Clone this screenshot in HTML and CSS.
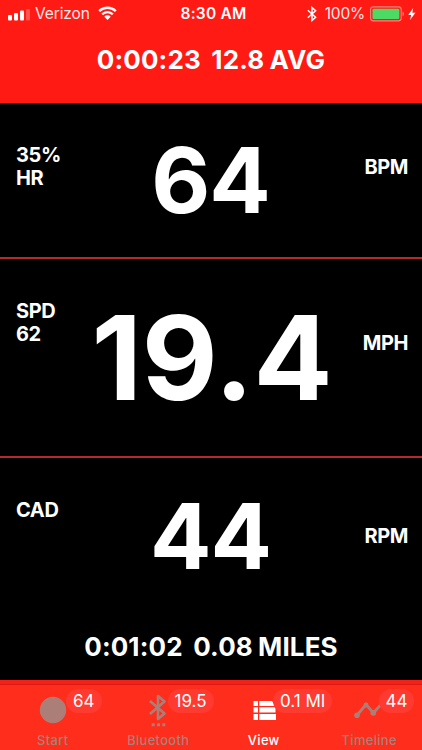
FILE: index.html
```html
<!DOCTYPE html>
<html lang="en">
<head>
    <meta charset="UTF-8">
    <meta name="viewport" content="width=device-width, initial-scale=1.0">
    <title>Ride View</title>
    <link rel="stylesheet" href="styles.css">
</head>
<body>
    <header class="header">
        <div class="status-bar">
            <div class="status-left">
                <svg class="signal" width="22" height="12" viewBox="0 0 22 12" fill="#fff">
                    <rect x="0" y="6" width="4" height="5.5" rx="1"/>
                    <rect x="6" y="4" width="4" height="7.5" rx="1"/>
                    <rect x="12" y="1.5" width="4" height="10" rx="1"/>
                    <rect x="18" y="0" width="4" height="11.5" rx="1" opacity=".25"/>
                </svg>
                <span class="carrier">Verizon</span>
                <svg class="wifi" width="19" height="14" viewBox="0 0 19 14">
                    <path d="M1.2 5.1a11.8 11.8 0 0 1 16.6 0M4.2 8.3a7.5 7.5 0 0 1 10.6 0" fill="none" stroke="#fff" stroke-width="2.4"/>
                    <path d="M9.5 14 6.3 10.7a4.5 4.5 0 0 1 6.4 0z" fill="#fff"/>
                </svg>
            </div>
            <span class="clock">8:30 AM</span>
            <div class="status-right">
                <svg class="bt" width="10" height="16" viewBox="0 0 10 16" fill="none" stroke="#fff" stroke-width="1.5">
                    <path d="M.8 4.3 8.6 11.3 5 14.5V1.5l3.6 3.2L.8 11.7"/>
                </svg>
                <span class="percent">100%</span>
                <svg class="battery" width="36" height="16" viewBox="0 0 36 16">
                    <rect x=".6" y=".9" width="30.6" height="14" rx="2.6" fill="none" stroke="#fff" stroke-opacity=".45" stroke-width="1.1"/>
                    <rect x="2.5" y="2.8" width="26.8" height="10.2" rx="1" fill="#4cd964"/>
                    <path d="M32.6 5.5c1.8.8 1.8 4 0 4.8z" fill="#fff" opacity=".5"/>
                </svg>
                <svg class="bolt" width="8" height="12" viewBox="0 0 8 12" fill="#fff">
                    <path d="M5.2 0 .2 6.9h3L2 12l5.5-7.2H4.3z"/>
                </svg>
            </div>
        </div>
        <div class="summary">0:00:23&nbsp; 12.8 AVG</div>
    </header>

    <main class="metrics">
        <section class="metric metric-hr">
            <div class="label">35%<br>HR</div>
            <div class="value">64</div>
            <div class="unit">BPM</div>
        </section>
        <section class="metric metric-spd">
            <div class="label">SPD<br>62</div>
            <div class="value">19.4</div>
            <div class="unit">MPH</div>
        </section>
        <section class="metric metric-cad">
            <div class="label">CAD</div>
            <div class="value">44</div>
            <div class="unit">RPM</div>
        </section>
        <div class="total">0:01:02&nbsp; 0.08 MILES</div>
    </main>

    <nav class="tab-bar">
        <div class="tab tab-start">
            <svg class="icon" width="34" height="34" viewBox="0 0 34 34">
                <circle cx="17" cy="17" r="13.2" fill="currentColor"/>
            </svg>
            <span class="badge">64</span>
            <span class="tab-name">Start</span>
        </div>
        <div class="tab">
            <svg class="icon" width="34" height="34" viewBox="0 0 34 34">
                <path d="M9 8 23.5 20.5 17 26V3l6.5 5.5L9 21" fill="none" stroke="currentColor" stroke-width="2.6" stroke-linejoin="round"/>
                <path d="M10.7 30.2h3v3h-3zM16 30.2h3v3h-3zM21.3 30.2h3v3h-3z" fill="currentColor"/>
            </svg>
            <span class="badge">19.5</span>
            <span class="tab-name">Bluetooth</span>
        </div>
        <div class="tab active">
            <svg class="icon" width="34" height="34" viewBox="0 0 34 34" fill="currentColor">
                <path d="M6.500 8h4.500v5H6.500zM12.300 8H25l2 3v2H12.300zM6.500 14.300h4.500v5.200H6.500zM12.300 14.300H28.500v5.200H12.300zM6.500 20.900h4.500v6H6.500zM12.300 20.900H29v6H12.300z"/>
            </svg>
            <span class="badge">0.1 MI</span>
            <span class="tab-name">View</span>
        </div>
        <div class="tab">
            <svg class="icon" width="34" height="34" viewBox="0 0 34 34">
                <path d="M5 22.300 14 11.500 21.500 20 28.500 12" fill="none" stroke="currentColor" stroke-width="2.800"/>
                <g fill="currentColor">
                    <circle cx="5" cy="22.300" r="2.800"/>
                    <circle cx="14" cy="12" r="2.400"/>
                    <circle cx="21.300" cy="19.800" r="2.900"/>
                </g>
            </svg>
            <span class="badge">44</span>
            <span class="tab-name">Timeline</span>
        </div>
    </nav>
</body>
</html>
```
FILE: styles.css
```css
* {
    box-sizing: border-box;
}
body {
    margin: 0;
    height: 750px;
    display: flex;
    flex-direction: column;
    background-color: #000;
    color: #fff;
    font-family: Inter, "Liberation Sans", sans-serif;
    overflow: hidden;
}
/* Header */
.header {
    height: 103px;
    background-color: #ff1a13;
}
.status-bar {
    display: grid;
    grid-template-columns: 1fr auto 1fr;
    align-items: center;
    height: 28px;
    padding: 0 6px 0 8px;
    font-size: 16px;
    line-height: 28px;
}
.status-left, .status-right {
    display: flex;
    align-items: center;
}
.status-right {
    justify-content: flex-end;
}
.signal {
    margin-top: 2px;
}
.carrier {
    margin: 0 8px 0 5px;
    font-size: 15.5px;
    letter-spacing: -0.1px;
    opacity: 0.9;
}
.wifi {
    margin-top: -2px;
}
.clock {
    margin-left: 3px;
    font-size: 15.5px;
    font-weight: 600;
    letter-spacing: 0.2px;
}
.percent {
    margin: 0 5px 0 8px;
    font-size: 15.5px;
    letter-spacing: -0.2px;
    opacity: 0.9;
}
.bolt {
    margin-left: 2px;
}
.summary {
    margin-top: 15px;
    text-align: center;
    font-size: 26px;
    font-weight: 700;
    line-height: 34px;
    letter-spacing: 0.12px;
    word-spacing: -1px;
}
/* Metrics */
.metrics {
    height: 577px;
}
.metric {
    display: grid;
    grid-template-columns: 1fr auto 1fr;
    align-items: start;
    padding: 0 14px 0 16px;
    border-bottom: 2px solid #b32b2e;
    font-weight: 700;
}
.label, .unit {
    font-size: 20px;
    line-height: 23px;
    letter-spacing: -0.4px;
}
.unit {
    text-align: right;
}
.value {
    margin-left: -3px;
    font-size: 91px;
    line-height: 90px;
    letter-spacing: -1px;
}
.metric-hr {
    height: 156px;
    padding-top: 32px;
}
.metric-hr .label {
    margin-top: 9px;
}
.metric-hr .unit {
    margin-top: 21px;
}
.metric-spd {
    height: 199px;
    padding-top: 41px;
}
.metric-spd .value {
    margin-left: 0;
    font-size: 117px;
    line-height: 116px;
    letter-spacing: 0;
}
.metric-spd .unit {
    margin-top: 32px;
}
.metric-cad {
    height: 168px;
    padding-top: 33px;
    border-bottom: 0;
}
.metric-cad .label {
    margin-top: 8px;
}
.metric-cad .unit {
    margin-top: 34px;
}
.total {
    margin-top: 4px;
    text-align: center;
    font-size: 26px;
    font-weight: 700;
    line-height: 34px;
    letter-spacing: 0.12px;
    word-spacing: -1px;
}
/* Tab bar */
.tab-bar {
    display: grid;
    grid-template-columns: repeat(4, 1fr);
    height: 70px;
    border-top: 4px solid #f4201a;
    background-color: #ff2d1b;
    box-shadow: inset 0 1px 0 #dc1915;
}
.tab {
    position: relative;
    display: flex;
    flex-direction: column;
    align-items: center;
    padding-top: 9px;
    color: #ab7f78;
}
.tab.active {
    color: #fff;
}
.tab-name {
    margin-top: 5px;
    font-size: 13px;
    font-weight: 500;
    line-height: 16px;
    letter-spacing: 0.3px;
}
.badge {
    position: absolute;
    top: 5px;
    left: 62px;
    height: 24px;
    padding: 0 7px;
    border-radius: 12px;
    background-color: #ff3a30;
    color: #fff;
    font-size: 17px;
    line-height: 24px;
    white-space: nowrap;
}
.tab-start .badge {
    left: 66px;
}
```
